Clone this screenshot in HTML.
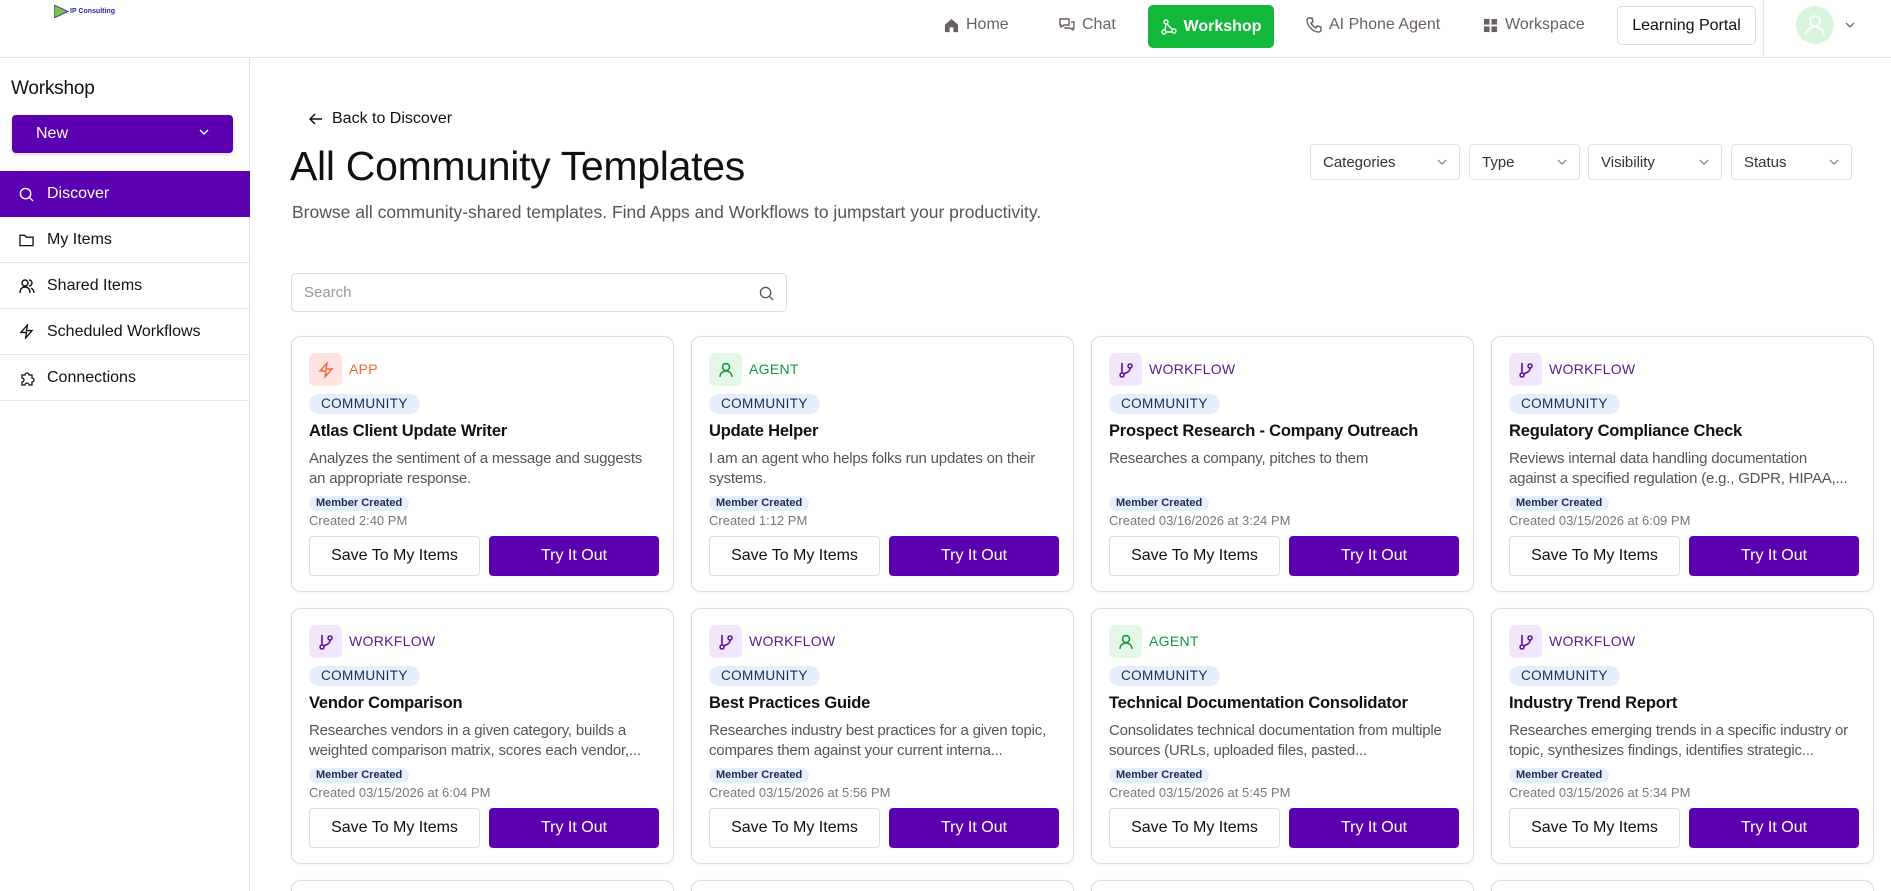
<!DOCTYPE html>
<html><head><meta charset="utf-8">
<style>
*{box-sizing:border-box;margin:0;padding:0}
html{width:1891px;height:891px;overflow:hidden}
body{width:1891px;height:891px;overflow:hidden;background:#fff;font-family:"Liberation Sans",Arial,sans-serif;color:#111;position:relative}
.hdr{position:absolute;left:0;top:0;width:1891px;height:58px;border-bottom:1px solid #e5e5e5;background:#fff}
.logo{position:absolute;left:54px;top:5px;display:flex;align-items:center}
.logo span{font-size:7px;font-weight:bold;color:#2a2a9a;margin-left:1px}
.nav{position:absolute;top:0;height:50px;display:flex;align-items:center;font-size:16px;color:#6b5f5f}
.nav svg{margin-right:7px}
.ws{position:absolute;left:1148px;top:5px;width:126px;height:43px;background:#12b83a;border-radius:5px;color:#fff;font-weight:bold;display:flex;align-items:center;justify-content:center;font-size:16px}
.lp{position:absolute;left:1617px;top:6px;width:139px;height:39px;border:1px solid #ddd;border-radius:5px;display:flex;align-items:center;justify-content:center;font-size:16px;color:#111}
.div{position:absolute;left:1763px;top:0;width:1px;height:58px;background:#e5e5e5}
.av{position:absolute;left:1796px;top:6px;width:38px;height:38px;border-radius:50%;background:#d9f5dd;display:flex;align-items:center;justify-content:center}
.side{position:absolute;left:0;top:58px;width:250px;height:833px;border-right:1px solid #e5e5e5}
.side h2{position:absolute;left:11px;top:20px;font-size:19px;font-weight:normal;color:#111;letter-spacing:-0.2px}
.new{position:absolute;left:12px;top:57px;width:221px;height:38px;background:#5a00b0;border-radius:4px;color:#fff;font-size:16px;padding-left:24px;display:flex;align-items:center;box-shadow:0 1px 3px rgba(0,0,0,.2)}
.new svg{position:absolute;right:24px;top:14px}
.item{position:absolute;left:0;width:250px;height:46px;border-bottom:1px solid #e5e5e5;display:flex;align-items:center;font-size:16px;color:#111}
.item svg{position:absolute;left:19px}
.item span{position:absolute;left:47px}
.item.act{background:#5a00b0;color:#fff;border-bottom:none}
.back{position:absolute;left:309px;top:110px;font-size:16px;color:#111;display:flex;align-items:center}
.back svg{margin-right:9px}
h1{position:absolute;left:290px;top:143px;font-size:41px;font-weight:normal;letter-spacing:-0.3px;color:#111}
.sub{position:absolute;left:292px;top:202px;font-size:17.5px;color:#555}
.flt{position:absolute;top:144px;height:36px;border:1px solid #e2e2e2;border-radius:4px;font-size:15px;color:#333;padding-left:12px;display:flex;align-items:center}
.flt svg{position:absolute;right:12px;top:14px}
.search{position:absolute;left:291px;top:273px;width:496px;height:39px;border:1px solid #ddd;border-radius:5px;font-size:15px;color:#999;padding-left:12px;display:flex;align-items:center}
.search svg{position:absolute;right:12px;top:12px}
.card{position:absolute;width:383px;height:256px;border:1px solid #ddd;border-radius:10px;box-shadow:0 1px 3px rgba(0,0,0,.06);background:#fff}
.ib{position:absolute;left:17px;top:16px;width:33px;height:33px;border-radius:6px;display:flex;align-items:center;justify-content:center}
.tl{position:absolute;left:57px;top:24px;font-size:14px;letter-spacing:.3px}
.pill{position:absolute;left:17px;top:57px;height:20px;padding:0 12px;border-radius:10px;background:#e5effc;color:#1c2b55;font-size:13.5px;letter-spacing:.4px;line-height:20px}
.tt{position:absolute;left:17px;top:85px;font-size:16.5px;font-weight:bold;color:#111;white-space:nowrap;letter-spacing:-0.2px}
.ds{position:absolute;left:17px;top:112px;width:347px;font-size:15px;line-height:20px;color:#555;height:40px;overflow:hidden;letter-spacing:-0.2px}
.mc{position:absolute;left:17px;top:159px;height:15px;padding:0 7px;border-radius:8px;background:#e5effc;color:#1c2b55;font-size:11px;font-weight:bold;line-height:15px}
.cr{position:absolute;left:17px;top:176px;font-size:13px;color:#777}
.b1{position:absolute;left:17px;top:199px;width:171px;height:40px;border:1px solid #ddd;border-radius:4px;font-size:16px;display:flex;align-items:center;justify-content:center;color:#111}
.b2{position:absolute;left:197px;top:199px;width:170px;height:40px;background:#5a00b0;border-radius:4px;font-size:16px;display:flex;align-items:center;justify-content:center;color:#fff}
.app .ib{background:#fde4e2}.app .tl{color:#f2643c}
.agt .ib{background:#e3f8e6}.agt .tl{color:#179340}
.wf .ib{background:#f2e6fb}.wf .tl{color:#5b1793}
</style></head><body>
<div class="hdr">
 <div class="logo"><svg width="15" height="13" viewBox="0 0 15 13"><polygon points="0,0 14,6.5 0,13" fill="#7dc242" stroke="#3b3bb0" stroke-width="1"/></svg><span>IP Consulting</span></div>
 <div class="nav" style="left:944px"><svg width="15" height="15" viewBox="0 0 16 16"><path d="M1 7 L8 1 L15 7 V15 H10 V10 H6 V15 H1 Z" fill="#6b5f5f"/></svg>Home</div>
 <div class="nav" style="left:1059px"><svg width="16" height="16" viewBox="0 0 16 16" fill="none" stroke="#6b5f5f" stroke-width="1.4"><path d="M1 2h9v6H5l-3 2V8H1z"/><path d="M12 5h3v6h-1v2l-3-2H6v-1"/></svg>Chat</div>
 <div class="ws"><svg width="16" height="16" viewBox="0 0 16 16" fill="none" stroke="#fff" stroke-width="1.4" style="margin-right:7px"><circle cx="5" cy="3" r="2"/><circle cx="3" cy="13" r="2"/><circle cx="13" cy="12" r="2"/><path d="M5 5 4 11M6 5l6 6M5 13h6"/></svg>Workshop</div>
 <div class="nav" style="left:1306px"><svg width="16" height="16" viewBox="0 0 16 16" fill="none" stroke="#6b5f5f" stroke-width="1.4"><path d="M3 1h3l1 4-2 1c1 2 3 4 5 5l1-2 4 1v3c0 1-1 2-2 2C7 15 1 9 1 3c0-1 1-2 2-2z"/></svg>AI Phone Agent</div>
 <div class="nav" style="left:1483px"><svg width="15" height="15" viewBox="0 0 16 16" fill="#6b5f5f"><rect x="1" y="1" width="6" height="6"/><rect x="9" y="1" width="6" height="6"/><rect x="1" y="9" width="6" height="6"/><rect x="9" y="9" width="6" height="6"/></svg>Workspace</div>
 <div class="lp">Learning Portal</div>
 <div class="div"></div>
 <div class="av"><svg width="20" height="22" viewBox="0 0 20 22" fill="none" stroke="#fff" stroke-width="1.6"><circle cx="10" cy="7" r="5"/><path d="M1 21c0-5 4-8 9-8s9 3 9 8"/></svg></div>
 <svg style="position:absolute;left:1845px;top:22px" width="10" height="6" viewBox="0 0 10 6" fill="none" stroke="#666" stroke-width="1.3"><path d="M1 1l4 4 4-4"/></svg>
</div>
<div class="side">
 <h2>Workshop</h2>
 <div class="new">New<svg width="10" height="6" viewBox="0 0 10 6" fill="none" stroke="#fff" stroke-width="1.4"><path d="M1 1l4 4 4-4"/></svg></div>
 <div class="item act" style="top:113px"><svg width="15" height="15" viewBox="0 0 16 16" fill="none" stroke="#fff" stroke-width="1.5"><circle cx="7" cy="7" r="5.5"/><path d="M11 11l4 4"/></svg><span>Discover</span></div>
 <div class="item" style="top:159px"><svg width="15" height="14" viewBox="0 0 16 14" fill="none" stroke="#111" stroke-width="1.4"><path d="M1 2h5l2 2h7v9H1z"/></svg><span>My Items</span></div>
 <div class="item" style="top:205px"><svg width="16" height="16" viewBox="0 0 16 16" fill="none" stroke="#111" stroke-width="1.4"><circle cx="6" cy="5" r="3"/><path d="M1 15c0-4 2-6 5-6s5 2 5 6M10 2a3 3 0 010 6M12 10c2 1 3 3 3 5"/></svg><span>Shared Items</span></div>
 <div class="item" style="top:251px"><svg width="15" height="15" viewBox="0 0 16 16" fill="none" stroke="#111" stroke-width="1.4"><path d="M9 1 2 9h6l-1 6 7-8H8z"/></svg><span>Scheduled Workflows</span></div>
 <div class="item" style="top:297px"><svg width="16" height="16" viewBox="0 0 16 16" fill="none" stroke="#111" stroke-width="1.3"><path d="M3 5h3a2 2 0 114 0h3v3a2 2 0 010 4v3h-3a2 2 0 10-4 0H3v-3a2 2 0 000-4z"/></svg><span>Connections</span></div>
</div>
<div class="back"><svg width="14" height="12" viewBox="0 0 14 12" fill="none" stroke="#111" stroke-width="1.5"><path d="M13 6H2M6 1 1 6l5 5"/></svg>Back to Discover</div>
<h1>All Community Templates</h1>
<div class="sub">Browse all community-shared templates. Find Apps and Workflows to jumpstart your productivity.</div>
<div class="flt" style="left:1310px;width:150px">Categories<svg width="10" height="6" viewBox="0 0 10 6" fill="none" stroke="#777" stroke-width="1.2"><path d="M1 1l4 4 4-4"/></svg></div>
<div class="flt" style="left:1469px;width:111px">Type<svg width="10" height="6" viewBox="0 0 10 6" fill="none" stroke="#777" stroke-width="1.2"><path d="M1 1l4 4 4-4"/></svg></div>
<div class="flt" style="left:1588px;width:134px">Visibility<svg width="10" height="6" viewBox="0 0 10 6" fill="none" stroke="#777" stroke-width="1.2"><path d="M1 1l4 4 4-4"/></svg></div>
<div class="flt" style="left:1731px;width:121px">Status<svg width="10" height="6" viewBox="0 0 10 6" fill="none" stroke="#777" stroke-width="1.2"><path d="M1 1l4 4 4-4"/></svg></div>
<div class="search">Search<svg width="15" height="15" viewBox="0 0 16 16" fill="none" stroke="#555" stroke-width="1.4"><circle cx="7" cy="7" r="5.5"/><path d="M11 11l4 4"/></svg></div>

<div class="card app" style="left:291px;top:336px"><div class="ib"><svg width="16" height="16" viewBox="0 0 16 16" fill="none" stroke="#f2643c" stroke-width="1.4"><path d="M9 1 2 9h6l-1 6 7-8H8z"/></svg></div><div class="tl">APP</div><div class="pill">COMMUNITY</div><div class="tt">Atlas Client Update Writer</div><div class="ds">Analyzes the sentiment of a message and suggests an appropriate response.</div><div class="mc">Member Created</div><div class="cr">Created 2:40 PM</div><div class="b1">Save To My Items</div><div class="b2">Try It Out</div></div>
<div class="card agt" style="left:691px;top:336px"><div class="ib"><svg width="14" height="16" viewBox="0 0 14 16" fill="none" stroke="#179340" stroke-width="1.5"><circle cx="7" cy="5" r="3.5"/><path d="M1 15c0-4 3-6 6-6s6 2 6 6"/></svg></div><div class="tl">AGENT</div><div class="pill">COMMUNITY</div><div class="tt">Update Helper</div><div class="ds">I am an agent who helps folks run updates on their systems.</div><div class="mc">Member Created</div><div class="cr">Created 1:12 PM</div><div class="b1">Save To My Items</div><div class="b2">Try It Out</div></div>
<div class="card wf" style="left:1091px;top:336px"><div class="ib"><svg width="14" height="16" viewBox="0 0 14 16" fill="none" stroke="#5b1793" stroke-width="1.6"><circle cx="3" cy="13" r="2"/><circle cx="11" cy="4" r="2"/><path d="M3 1v10M11 6c0 4-4 5-7 6"/></svg></div><div class="tl">WORKFLOW</div><div class="pill">COMMUNITY</div><div class="tt">Prospect Research - Company Outreach</div><div class="ds">Researches a company, pitches to them</div><div class="mc">Member Created</div><div class="cr">Created 03/16/2026 at 3:24 PM</div><div class="b1">Save To My Items</div><div class="b2">Try It Out</div></div>
<div class="card wf" style="left:1491px;top:336px"><div class="ib"><svg width="14" height="16" viewBox="0 0 14 16" fill="none" stroke="#5b1793" stroke-width="1.6"><circle cx="3" cy="13" r="2"/><circle cx="11" cy="4" r="2"/><path d="M3 1v10M11 6c0 4-4 5-7 6"/></svg></div><div class="tl">WORKFLOW</div><div class="pill">COMMUNITY</div><div class="tt">Regulatory Compliance Check</div><div class="ds">Reviews internal data handling documentation against a specified regulation (e.g., GDPR, HIPAA,...</div><div class="mc">Member Created</div><div class="cr">Created 03/15/2026 at 6:09 PM</div><div class="b1">Save To My Items</div><div class="b2">Try It Out</div></div>

<div class="card wf" style="left:291px;top:608px"><div class="ib"><svg width="14" height="16" viewBox="0 0 14 16" fill="none" stroke="#5b1793" stroke-width="1.6"><circle cx="3" cy="13" r="2"/><circle cx="11" cy="4" r="2"/><path d="M3 1v10M11 6c0 4-4 5-7 6"/></svg></div><div class="tl">WORKFLOW</div><div class="pill">COMMUNITY</div><div class="tt">Vendor Comparison</div><div class="ds">Researches vendors in a given category, builds a weighted comparison matrix, scores each vendor,...</div><div class="mc">Member Created</div><div class="cr">Created 03/15/2026 at 6:04 PM</div><div class="b1">Save To My Items</div><div class="b2">Try It Out</div></div>
<div class="card wf" style="left:691px;top:608px"><div class="ib"><svg width="14" height="16" viewBox="0 0 14 16" fill="none" stroke="#5b1793" stroke-width="1.6"><circle cx="3" cy="13" r="2"/><circle cx="11" cy="4" r="2"/><path d="M3 1v10M11 6c0 4-4 5-7 6"/></svg></div><div class="tl">WORKFLOW</div><div class="pill">COMMUNITY</div><div class="tt">Best Practices Guide</div><div class="ds">Researches industry best practices for a given topic, compares them against your current interna...</div><div class="mc">Member Created</div><div class="cr">Created 03/15/2026 at 5:56 PM</div><div class="b1">Save To My Items</div><div class="b2">Try It Out</div></div>
<div class="card agt" style="left:1091px;top:608px"><div class="ib"><svg width="14" height="16" viewBox="0 0 14 16" fill="none" stroke="#179340" stroke-width="1.5"><circle cx="7" cy="5" r="3.5"/><path d="M1 15c0-4 3-6 6-6s6 2 6 6"/></svg></div><div class="tl">AGENT</div><div class="pill">COMMUNITY</div><div class="tt">Technical Documentation Consolidator</div><div class="ds">Consolidates technical documentation from multiple sources (URLs, uploaded files, pasted...</div><div class="mc">Member Created</div><div class="cr">Created 03/15/2026 at 5:45 PM</div><div class="b1">Save To My Items</div><div class="b2">Try It Out</div></div>
<div class="card wf" style="left:1491px;top:608px"><div class="ib"><svg width="14" height="16" viewBox="0 0 14 16" fill="none" stroke="#5b1793" stroke-width="1.6"><circle cx="3" cy="13" r="2"/><circle cx="11" cy="4" r="2"/><path d="M3 1v10M11 6c0 4-4 5-7 6"/></svg></div><div class="tl">WORKFLOW</div><div class="pill">COMMUNITY</div><div class="tt">Industry Trend Report</div><div class="ds">Researches emerging trends in a specific industry or topic, synthesizes findings, identifies strategic...</div><div class="mc">Member Created</div><div class="cr">Created 03/15/2026 at 5:34 PM</div><div class="b1">Save To My Items</div><div class="b2">Try It Out</div></div>

<div class="card" style="left:291px;top:880px;height:20px"></div>
<div class="card" style="left:691px;top:880px;height:20px"></div>
<div class="card" style="left:1091px;top:880px;height:20px"></div>
<div class="card" style="left:1491px;top:880px;height:20px"></div>
</body></html>
